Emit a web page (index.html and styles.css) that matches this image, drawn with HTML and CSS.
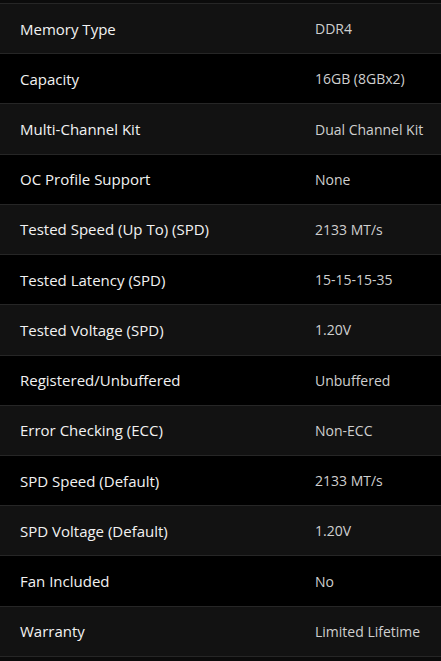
FILE: index.html
```html
<!DOCTYPE html>
<html lang="en">
  <head>
    <meta charset="UTF-8" />
    <meta name="viewport" content="width=device-width, initial-scale=1.0" />
    <title>Specs</title>
    <link rel="stylesheet" href="styles.css">
  </head>
  <body>
    <div class="specs">
      <div class="spec-row"><span class="spec-label">Memory Type</span><span class="spec-value">DDR4</span></div>
      <div class="spec-row"><span class="spec-label">Capacity</span><span class="spec-value">16GB (8GBx2)</span></div>
      <div class="spec-row"><span class="spec-label">Multi-Channel Kit</span><span class="spec-value">Dual Channel Kit</span></div>
      <div class="spec-row"><span class="spec-label">OC Profile Support</span><span class="spec-value">None</span></div>
      <div class="spec-row"><span class="spec-label">Tested Speed (Up To) (SPD)</span><span class="spec-value">2133 MT/s</span></div>
      <div class="spec-row"><span class="spec-label">Tested Latency (SPD)</span><span class="spec-value">15-15-15-35</span></div>
      <div class="spec-row"><span class="spec-label">Tested Voltage (SPD)</span><span class="spec-value">1.20V</span></div>
      <div class="spec-row"><span class="spec-label">Registered/Unbuffered</span><span class="spec-value">Unbuffered</span></div>
      <div class="spec-row"><span class="spec-label">Error Checking (ECC)</span><span class="spec-value">Non-ECC</span></div>
      <div class="spec-row"><span class="spec-label">SPD Speed (Default)</span><span class="spec-value">2133 MT/s</span></div>
      <div class="spec-row"><span class="spec-label">SPD Voltage (Default)</span><span class="spec-value">1.20V</span></div>
      <div class="spec-row"><span class="spec-label">Fan Included</span><span class="spec-value">No</span></div>
      <div class="spec-row"><span class="spec-label">Warranty</span><span class="spec-value">Limited Lifetime</span></div>
    </div>
  </body>
</html>
```

FILE: styles.css
```css
body {
  margin: 0;
  padding: 0;
  background-color: #0b0b0b;
  font-family: "Open Sans", Arial, sans-serif;
}

.specs {
  padding-top: 3px;
}

.spec-row {
  display: flex;
  align-items: center;
  height: 49.23px;
  border-top: 1px solid #262626;
  background-color: #121212;
  font-size: 15px;
}

.spec-row:nth-child(even) {
  background-color: #000;
}

.spec-row:last-child {
  border-bottom: 1px solid #262626;
}

.spec-label {
  width: 295px;
  padding-left: 20px;
  color: #f2f2f2;
}

.spec-value {
  color: #cfcfcf;
  font-size: 14px;
}
```
